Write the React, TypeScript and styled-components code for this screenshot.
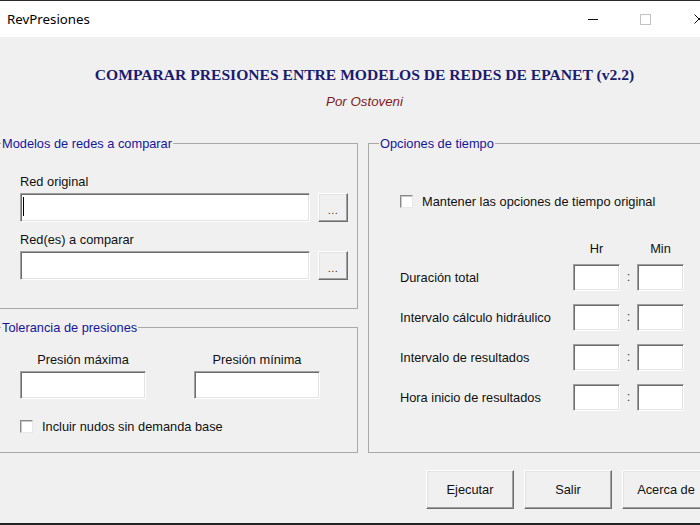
import { FC } from "react";
import styled, { createGlobalStyle } from "styled-components";

const GlobalStyle = createGlobalStyle`
  html, body {
    margin: 0;
    padding: 0;
    background: #f0f0f0;
    overflow: hidden;
  }
  * {
    box-sizing: border-box;
  }
`;

const timeRows = [
  "Duración total",
  "Intervalo cálculo hidráulico",
  "Intervalo de resultados",
  "Hora inicio de resultados",
];

const App: FC = () => {
  return (
    <Window>
      <GlobalStyle />
      <TitleBar>
        <span className="title">RevPresiones</span>
        <Controls>
          <CtrlButton>
            <MinimizeGlyph />
          </CtrlButton>
          <CtrlButton>
            <MaximizeGlyph />
          </CtrlButton>
          <CtrlButton>
            <svg width="10" height="10" viewBox="0 0 10 10">
              <path d="M0.5 0.5 L9.5 9.5 M9.5 0.5 L0.5 9.5" stroke="#111" strokeWidth="1" />
            </svg>
          </CtrlButton>
        </Controls>
      </TitleBar>
      <Body>
        <Header>
          <h1 className="heading">
            COMPARAR PRESIONES ENTRE MODELOS DE REDES DE EPANET (v2.2)
          </h1>
          <p className="author">Por Ostoveni</p>
        </Header>
        <Main>
          <LeftColumn>
            <Group $h={173}>
              <Legend $offset={3}>Modelos de redes a comparar</Legend>
              <NetworkBody>
                <FieldLabel>Red original</FieldLabel>
                <FileRow>
                  <TextBox $w={290} $h={29}>
                    <Caret />
                  </TextBox>
                  <BrowseButton>...</BrowseButton>
                </FileRow>
                <FieldLabel $top={10}>Red(es) a comparar</FieldLabel>
                <FileRow>
                  <TextBox $w={290} $h={29} />
                  <BrowseButton>...</BrowseButton>
                </FileRow>
              </NetworkBody>
            </Group>
            <Group $h={133}>
              <Legend $offset={3}>Tolerancia de presiones</Legend>
              <ToleranceBody>
                <PressureRow>
                  <PressureCol>
                    <FieldLabel $center>Presión máxima</FieldLabel>
                    <TextBox $w={126} $h={28} />
                  </PressureCol>
                  <PressureCol>
                    <FieldLabel $center>Presión mínima</FieldLabel>
                    <TextBox $w={126} $h={28} />
                  </PressureCol>
                </PressureRow>
                <CheckRow $top={20}>
                  <CheckBox />
                  <span>Incluir nudos sin demanda base</span>
                </CheckRow>
              </ToleranceBody>
            </Group>
          </LeftColumn>
          <Group>
            <Legend $offset={11}>Opciones de tiempo</Legend>
            <TimeBody>
              <CheckRow>
                <CheckBox />
                <span>Mantener las opciones de tiempo original</span>
              </CheckRow>
              <TimeTable>
                <TimeHeader>
                  <span />
                  <span className="unit">Hr</span>
                  <span />
                  <span className="unit">Min</span>
                </TimeHeader>
                {timeRows.map((label) => (
                  <TimeRow key={label}>
                    <span>{label}</span>
                    <TextBox $w={47} $h={27} />
                    <span className="colon">:</span>
                    <TextBox $w={47} $h={27} />
                  </TimeRow>
                ))}
              </TimeTable>
            </TimeBody>
          </Group>
        </Main>
        <ButtonBar>
          <PushButton>Ejecutar</PushButton>
          <PushButton>Salir</PushButton>
          <PushButton>Acerca de</PushButton>
        </ButtonBar>
      </Body>
    </Window>
  );
};

export default App;

const uiFont = `"Liberation Sans", Arial, sans-serif`;

const Window = styled.div`
  width: 727px;
  height: 525px;
  margin-left: -2px;
  display: flex;
  flex-direction: column;
  border-top: 1px solid #2a2a2a;
  border-bottom: 2px solid #222;
  background: #f0f0f0;
  font-family: ${uiFont};
  font-size: 12.8px;
  color: #111;
`;

const TitleBar = styled.div`
  display: flex;
  align-items: center;
  height: 36px;
  background: #fff;
  .title {
    padding-left: 9px;
    font-family: "Noto Sans", sans-serif;
    font-size: 13.3px;
    color: #000;
  }
`;

const Controls = styled.div`
  display: flex;
  margin-left: auto;
  height: 100%;
`;

const CtrlButton = styled.div`
  width: 53px;
  height: 100%;
  display: flex;
  align-items: center;
  justify-content: center;
`;

const MinimizeGlyph = styled.div`
  width: 10px;
  height: 1px;
  background: #111;
`;

const MaximizeGlyph = styled.div`
  width: 11px;
  height: 11px;
  border: 1px solid #c4c4c4;
`;

const Body = styled.div`
  flex: 1;
  display: flex;
  flex-direction: column;
  padding-right: 10px;
`;

const Header = styled.div`
  padding-top: 28px;
  padding-left: 16px;
  text-align: center;
  .heading {
    margin: 0;
    font-family: "Liberation Serif", "Times New Roman", serif;
    font-weight: 700;
    font-size: 15.6px;
    line-height: 20px;
    color: #1b1b6f;
  }
  .author {
    margin: 9px 0 0;
    font-family: ${uiFont};
    font-style: italic;
    font-size: 13.3px;
    line-height: 16px;
    color: #7e1c1c;
  }
`;

const Main = styled.div`
  margin-top: 26px;
  display: grid;
  grid-template-columns: 360px 1fr;
  column-gap: 10px;
`;

const LeftColumn = styled.div`
  display: flex;
  flex-direction: column;
  gap: 11px;
`;

const Group = styled.fieldset<{ $h?: number }>`
  margin: 0;
  padding: 0;
  min-width: 0;
  border: 1px solid #a9a9a9;
  height: ${({ $h }) => ($h ? `${$h}px` : "auto")};
`;

const Legend = styled.legend<{ $offset: number }>`
  margin-left: ${({ $offset }) => $offset - 1}px;
  padding: 0 1px;
  line-height: 15px;
  font-size: 12.8px;
  color: #16169a;
`;

const NetworkBody = styled.div`
  padding: 23px 0 0 21px;
`;

const FieldLabel = styled.div<{ $top?: number; $center?: boolean }>`
  line-height: 15px;
  margin-top: ${({ $top }) => $top || 0}px;
  margin-bottom: 4px;
  text-align: ${({ $center }) => ($center ? "center" : "left")};
`;

const FileRow = styled.div`
  display: flex;
  gap: 8px;
`;

const TextBox = styled.div<{ $w: number; $h: number }>`
  width: ${({ $w }) => $w}px;
  height: ${({ $h }) => $h}px;
  background: #fff;
  border: 1px solid;
  border-color: #a0a0a0 #fff #fff #a0a0a0;
  box-shadow: inset 1px 1px 0 #6d6d6d, inset -1px -1px 0 #e3e3e3;
  padding: 3px 0 0 2px;
`;

const Caret = styled.div`
  width: 1px;
  height: 19px;
  background: #000;
`;

const BrowseButton = styled.div`
  width: 30px;
  height: 29px;
  display: flex;
  align-items: center;
  justify-content: center;
  padding-top: 5px;
  font-size: 11px;
  letter-spacing: 0.5px;
  color: #333;
  background: #f0f0f0;
  border: 1px solid;
  border-color: #fff #6d6d6d #6d6d6d #fff;
  box-shadow: inset -1px -1px 0 #a0a0a0, inset 1px 1px 0 #e3e3e3;
`;

const ToleranceBody = styled.div`
  padding: 17px 0 0 21px;
`;

const PressureRow = styled.div`
  display: flex;
  gap: 48px;
`;

const PressureCol = styled.div`
  display: flex;
  flex-direction: column;
  width: 126px;
`;

const CheckRow = styled.div<{ $top?: number }>`
  display: flex;
  align-items: center;
  gap: 9px;
  height: 15px;
  margin-top: ${({ $top }) => $top || 0}px;
  line-height: 15px;
`;

const CheckBox = styled.div`
  width: 13px;
  height: 13px;
  background: #fff;
  border: 1px solid;
  border-color: #8a8a8a #e8e8e8 #e8e8e8 #8a8a8a;
  box-shadow: inset 1px 1px 0 #c8c8c8;
`;

const TimeBody = styled.div`
  padding: 43px 0 0 31px;
`;

const TimeTable = styled.div`
  margin-top: 32px;
  display: flex;
  flex-direction: column;
  gap: 13px;
`;

const TimeHeader = styled.div`
  display: grid;
  grid-template-columns: 173px 47px 17px 47px;
  line-height: 15px;
  margin-bottom: -5px;
  .unit {
    text-align: center;
  }
`;

const TimeRow = styled.div`
  display: grid;
  grid-template-columns: 173px 47px 17px 47px;
  align-items: center;
  height: 27px;
  .colon {
    text-align: center;
    margin-top: -3px;
    color: #444;
  }
`;

const ButtonBar = styled.div`
  margin-top: 17px;
  padding-right: 5px;
  display: flex;
  justify-content: flex-end;
  gap: 10px;
`;

const PushButton = styled.div`
  width: 88px;
  height: 39px;
  display: flex;
  align-items: center;
  justify-content: center;
  background: #f0f0f0;
  border: 1px solid;
  border-color: #fff #6d6d6d #6d6d6d #fff;
  box-shadow: inset -1px -1px 0 #a0a0a0, inset 1px 1px 0 #e3e3e3;
`;
